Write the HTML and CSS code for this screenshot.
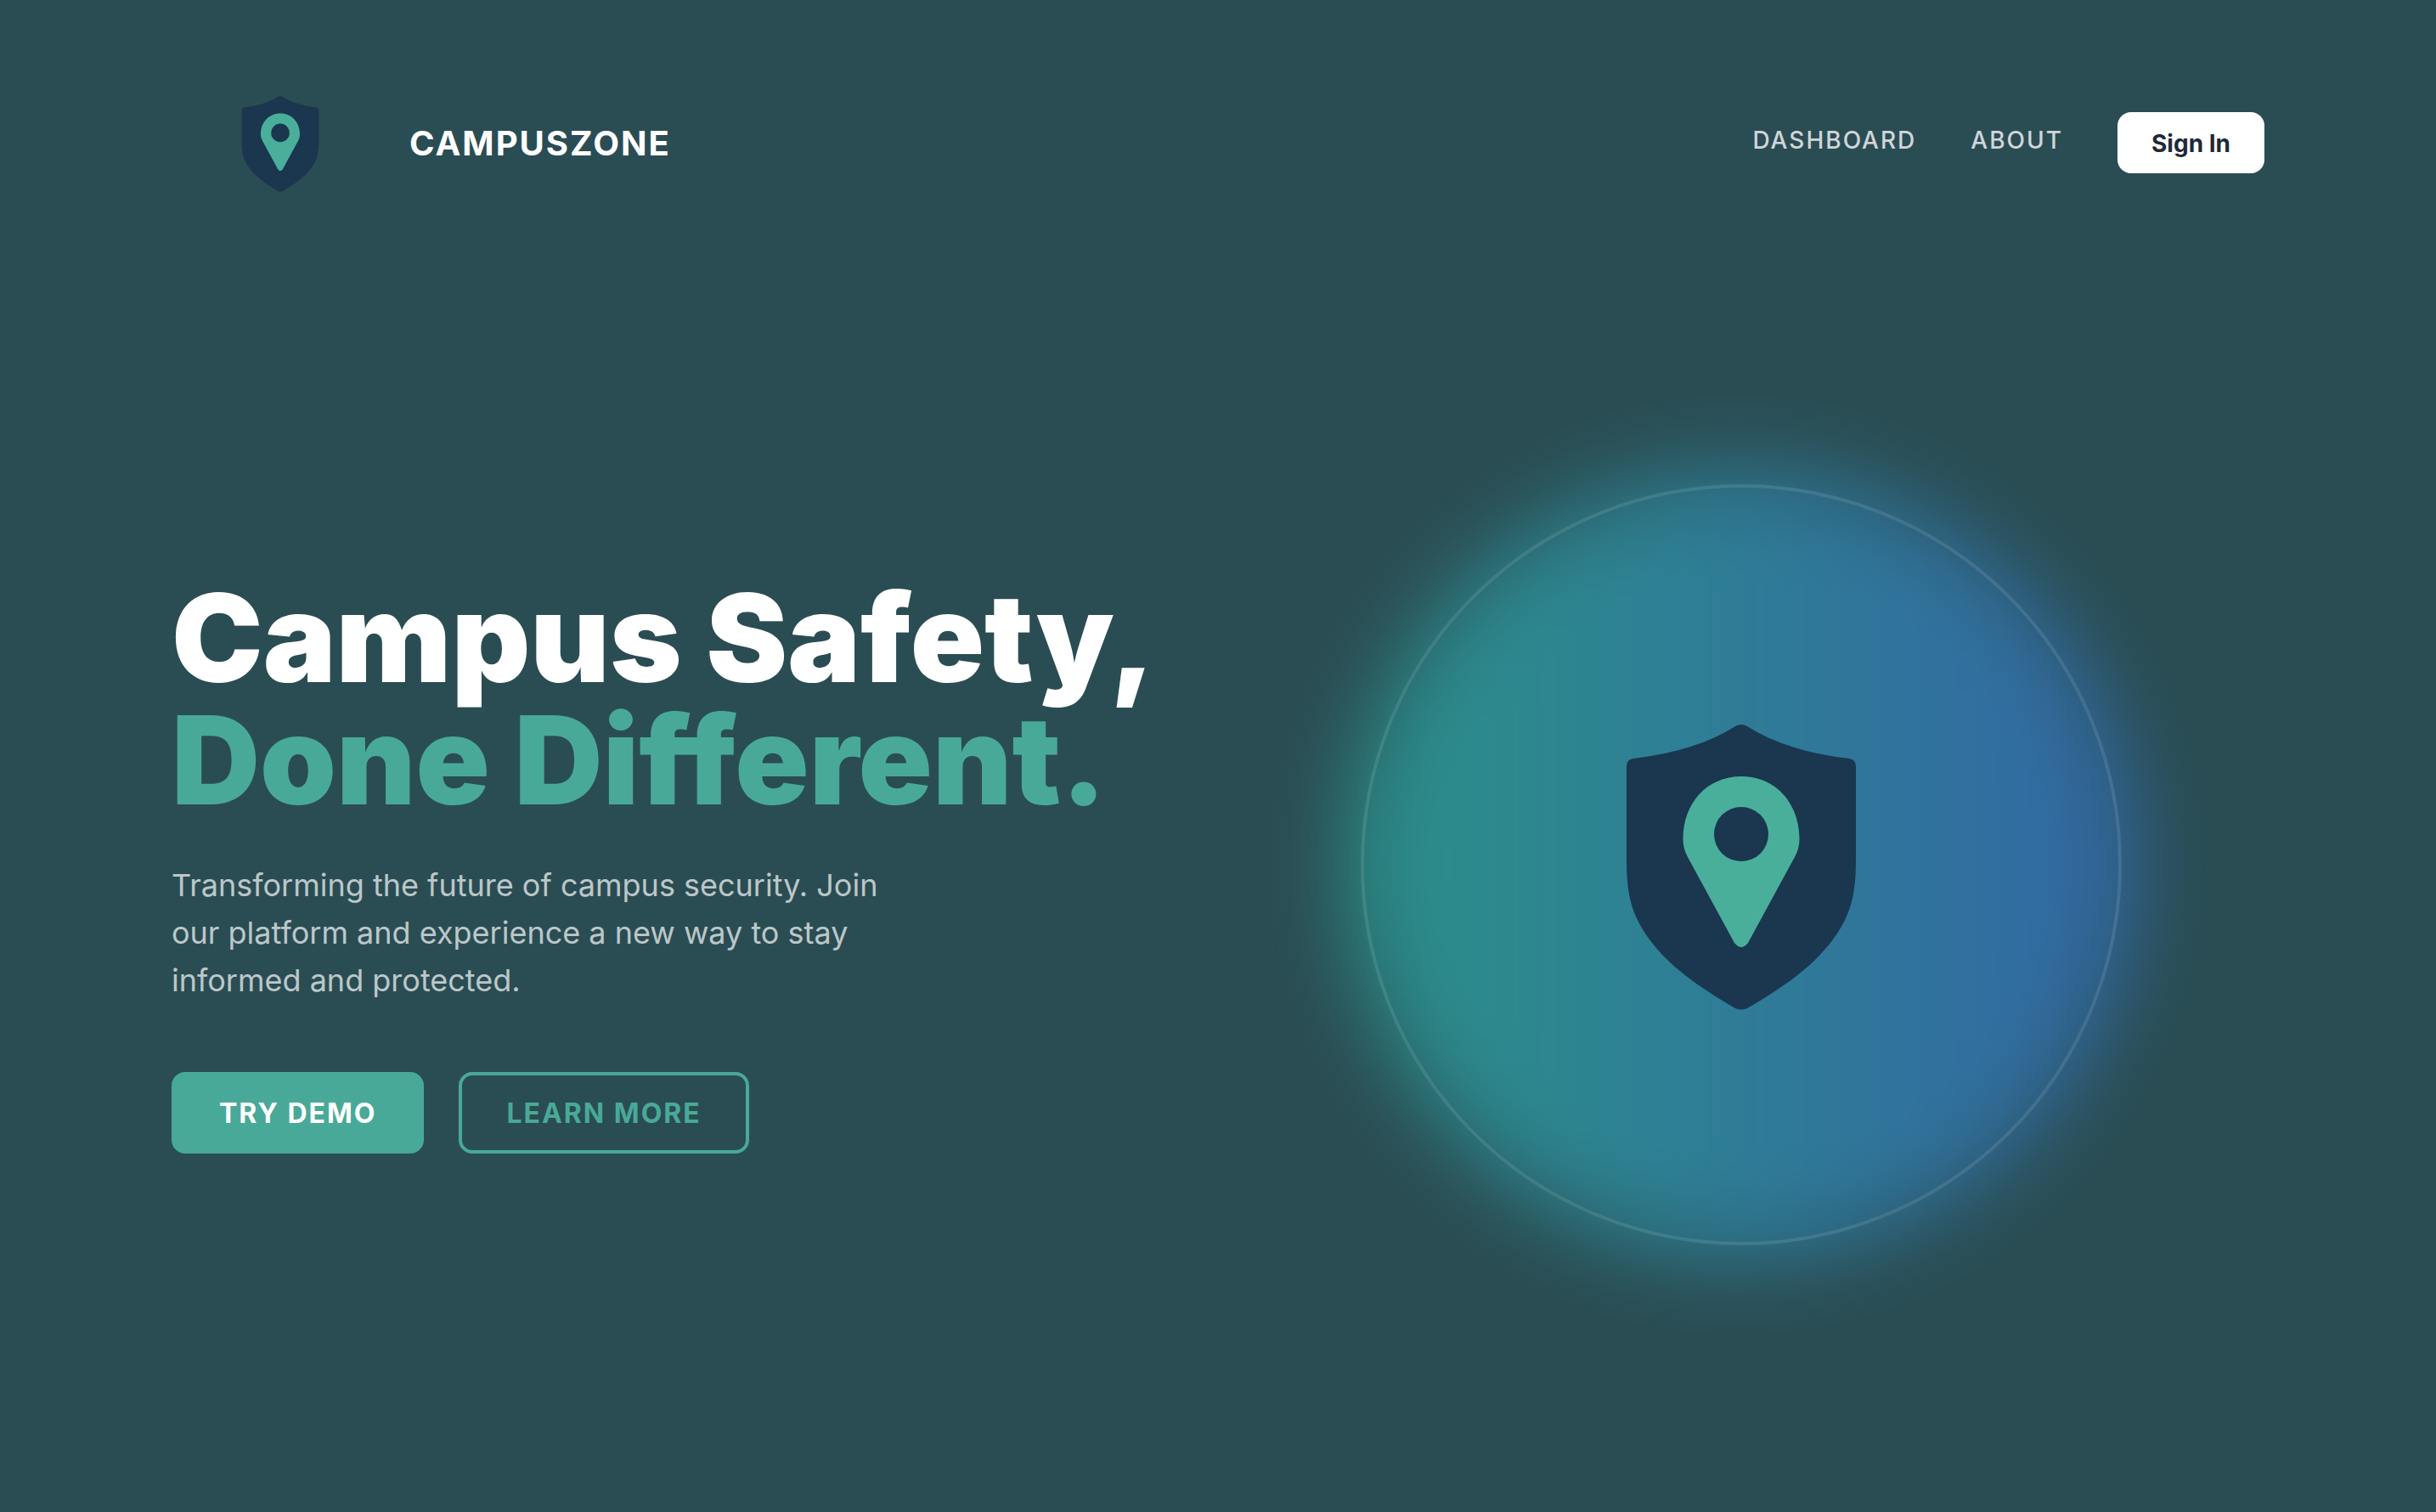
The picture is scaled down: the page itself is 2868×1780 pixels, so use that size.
FILE: index.html
```html
<!DOCTYPE html>
<html lang="en">
<head>
    <meta charset="UTF-8">
    <meta name="viewport" content="width=device-width, initial-scale=1.0">
    <title>CampusZone</title>
    <link rel="stylesheet" href="styles.css">
</head>
<body>
    <svg class="defs" width="0" height="0">
        <symbol id="logo" viewBox="0 0 270 336">
            <path fill="#1b364f" d="M128 2 Q135 -2 142 2 Q187 31 262 40 Q270 41 270 49 V160 C270 202 263 226 243 253 C220 284 188 307 142 334 Q135 337 128 334 C82 307 50 284 27 253 C7 226 0 202 0 160 V49 Q0 41 8 40 Q83 31 128 2 Z"/>
            <path fill="#49af9a" d="M135.500 61 C176 61 203.500 93 203.500 135 Q203.500 146 198 156 L143 257 Q135 267 127 257 L72 156 Q66.500 146 66.500 135 C66.500 93 94 61 135.500 61 Z"/>
            <circle fill="#1b364f" cx="135" cy="129" r="32"/>
        </symbol>
    </svg>

    <header class="navbar">
        <div class="brand">
            <svg class="brand-logo"><use href="#logo"/></svg>
            <span class="brand-name">CAMPUSZONE</span>
        </div>
        <nav class="nav-links">
            <a class="nav-link" href="#">DASHBOARD</a>
            <a class="nav-link" href="#">ABOUT</a>
            <a class="sign-in" href="#">Sign In</a>
        </nav>
    </header>

    <main class="hero">
        <section class="hero-text">
            <h1 class="title">Campus Safety,<br><span class="accent">Done Different.</span></h1>
            <p class="lead">Transforming the future of campus security. Join our platform and experience a new way to stay informed and protected.</p>
            <div class="actions">
                <a class="btn btn-fill" href="#">TRY DEMO</a>
                <a class="btn btn-outline" href="#">LEARN MORE</a>
            </div>
        </section>
        <div class="visual">
            <div class="glow"></div>
            <div class="ring">
                <svg class="ring-logo"><use href="#logo"/></svg>
            </div>
        </div>
    </main>
</body>
</html>
```
FILE: styles.css
```css
* {
    box-sizing: border-box;
}

body {
    margin: 0;
    height: 1780px;
    overflow: hidden;
    background-color: #2a4d53;
    font-family: Inter, sans-serif;
    color: white;
}

a {
    text-decoration: none;
}

.defs {
    display: block;
}

.navbar {
    display: flex;
    justify-content: space-between;
    height: 336px;
    padding: 0 202px;
}

.brand {
    display: flex;
    align-items: center;
    height: 336px;
    gap: 106px;
    padding-left: 82px;
}

.brand-logo {
    width: 92px;
    height: 113px;
    margin-top: 2px;
}

.brand-name {
    font-size: 40px;
    font-weight: 700;
    letter-spacing: 2px;
}

.nav-links {
    display: flex;
    align-items: center;
    gap: 64px;
    height: 336px;
}

.nav-link {
    font-size: 28px;
    font-weight: 500;
    letter-spacing: 2px;
    color: #d1d5db;
    padding-bottom: 6px;
}

.sign-in {
    padding: 19px 40px 17px;
    border-radius: 16px;
    background-color: white;
    color: #1f2937;
    font-size: 28px;
    font-weight: 700;
    line-height: 36px;
}

.hero {
    display: flex;
    justify-content: space-between;
    height: 1364px;
    padding: 0 370px 0 202px;
}

.hero-text {
    padding-top: 343px;
}

.title {
    margin: 0;
    font-size: 144px;
    line-height: 144px;
    font-weight: 900;
}

.accent {
    color: #49a998;
}

.lead {
    width: 896px;
    margin: 47px 0 0;
    font-size: 36px;
    line-height: 56px;
    color: rgba(255, 255, 255, 0.7);
}

.actions {
    display: flex;
    gap: 41px;
    margin-top: 80px;
}

.btn {
    height: 96px;
    padding: 0 52px;
    border: 4px solid #49a998;
    border-radius: 16px;
    font-size: 32px;
    font-weight: 700;
    line-height: 90px;
    letter-spacing: 2px;
}

.btn-fill {
    background-color: #49a998;
    color: white;
}

.btn-outline {
    color: #49a998;
}

.visual {
    display: grid;
    width: 896px;
    height: 896px;
    margin-top: 234px;
}

.glow,
.ring {
    grid-area: 1 / 1;
    border-radius: 50%;
}

.glow {
    background: linear-gradient(to right, #2dd4bf, #3b82f6);
    opacity: 0.5;
    filter: blur(48px);
    transform: scale(1.03);
}

.ring {
    display: flex;
    align-items: center;
    justify-content: center;
    border: 4px solid rgba(255, 255, 255, 0.1);
    backdrop-filter: blur(24px);
}

.ring-logo {
    width: 270px;
    height: 336px;
    margin-top: 5px;
}
```
